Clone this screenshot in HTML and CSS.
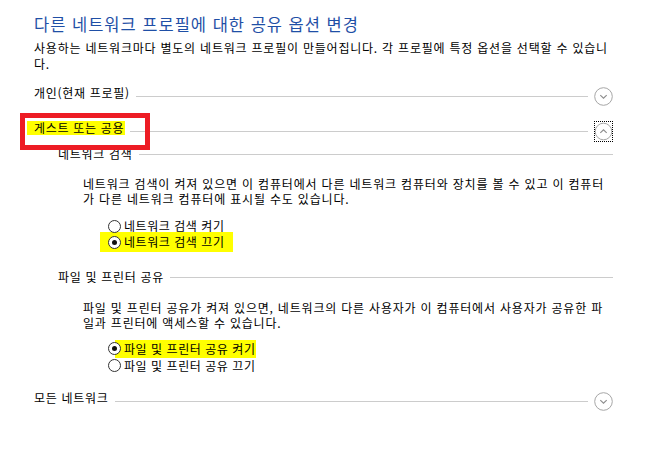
FILE: index.html
```html
<!DOCTYPE html>
<html lang="ko">
<head>
<meta charset="utf-8">
<title>고급 공유 설정</title>
<link rel="stylesheet" href="styles.css">
</head>
<body>
<div class="page">
  <h1 class="title">다른 네트워크 프로필에 대한 공유 옵션 변경</h1>
  <p class="desc">사용하는 네트워크마다 별도의 네트워크 프로필이 만들어집니다. 각 프로필에 특정 옵션을 선택할 수 있습니<br>다.</p>

  <div class="section sec-private">
    <div class="sec-head">
      <span class="sec-label">개인(현재 프로필)</span>
      <span class="rule"></span>
      <span class="toggle">
        <svg width="19" height="19" viewBox="0 0 19 19"><circle cx="9.5" cy="9.5" r="8.8" fill="none" stroke="#a6a6a6" stroke-width="1"/><path d="M6.3 8.2 L9.5 11.2 L12.7 8.2" fill="none" stroke="#8c8c8c" stroke-width="1.1"/></svg>
      </span>
    </div>
  </div>

  <div class="section sec-guest">
    <div class="sec-head head-guest">
      <span class="sec-label marked">게스트 또는 공용</span>
      <span class="rule"></span>
      <span class="toggle focused">
        <svg width="19" height="19" viewBox="0 0 19 19"><circle cx="9.5" cy="9.5" r="8.3" fill="none" stroke="#a6a6a6" stroke-width="1"/><path d="M6.3 10.8 L9.5 7.8 L12.7 10.8" fill="none" stroke="#8c8c8c" stroke-width="1.1"/></svg>
      </span>
    </div>

    <div class="sub sub-discovery">
      <div class="sub-head">
        <span class="sub-label">네트워크 검색</span>
        <span class="rule"></span>
      </div>
      <p class="sub-desc">네트워크 검색이 켜져 있으면 이 컴퓨터에서 다른 네트워크 컴퓨터와 장치를 볼 수 있고 이 컴퓨터<br>가 다른 네트워크 컴퓨터에 표시될 수도 있습니다.</p>
      <div class="radios radios-a">
        <div class="radio-row"><span class="radio"></span><span class="radio-text">네트워크 검색 켜기</span></div>
        <div class="radio-row"><span class="mark-wide"><span class="radio checked"></span><span class="radio-text">네트워크 검색 끄기</span></span></div>
      </div>
    </div>

    <div class="sub sub-sharing">
      <div class="sub-head">
        <span class="sub-label">파일 및 프린터 공유</span>
        <span class="rule"></span>
      </div>
      <p class="sub-desc">파일 및 프린터 공유가 켜져 있으면, 네트워크의 다른 사용자가 이 컴퓨터에서 사용자가 공유한 파<br>일과 프린터에 액세스할 수 있습니다.</p>
      <div class="radios radios-b">
        <div class="radio-row tall"><span class="radio checked"></span><span class="radio-text mark-text">파일 및 프린터 공유 켜기</span></div>
        <div class="radio-row tall"><span class="radio"></span><span class="radio-text">파일 및 프린터 공유 끄기</span></div>
      </div>
    </div>
  </div>

  <div class="section sec-all">
    <div class="sec-head">
      <span class="sec-label">모든 네트워크</span>
      <span class="rule"></span>
      <span class="toggle">
        <svg width="19" height="19" viewBox="0 0 19 19"><circle cx="9.5" cy="9.5" r="8.8" fill="none" stroke="#a6a6a6" stroke-width="1"/><path d="M6.3 8.2 L9.5 11.2 L12.7 8.2" fill="none" stroke="#8c8c8c" stroke-width="1.1"/></svg>
      </span>
    </div>
  </div>

  <div class="annot-box"></div>
</div>
</body>
</html>
```

FILE: styles.css
```css
html, body {
  margin: 0;
  padding: 0;
  background: #ffffff;
}

body {
  font-family: "Noto Sans CJK KR", "Noto Sans", sans-serif;
  font-size: 12px;
  color: #000000;
}

.page {
  position: relative;
  width: 579px;
  padding-left: 34px;
  padding-top: 13px;
  display: flex;
  flex-direction: column;
}

.title {
  margin: 0;
  font-size: 16.5px;
  font-weight: normal;
  line-height: 22px;
  color: #1f4fa6;
  letter-spacing: 1px;
  white-space: nowrap;
}

.desc {
  margin: 5px 0 0 0;
  line-height: 16px;
  letter-spacing: 0.78px;
  white-space: nowrap;
}

.section {
  display: flex;
  flex-direction: column;
}

.sec-private { margin-top: 14px; }
.sec-guest { margin-top: 15px; }
.sec-all { margin-top: 17px; }

.sec-head {
  display: flex;
  align-items: center;
  height: 20px;
}

.head-guest {
  height: 21px;
}

.sec-label {
  line-height: 14px;
  margin-bottom: 6px;
  letter-spacing: 0.7px;
  white-space: nowrap;
}

.sec-label.marked {
  background: #ffff00;
  padding: 0 1px 0 7px;
  margin-left: -7px;
  margin-bottom: 8px;
}

.rule {
  flex: 1;
  height: 1px;
  background: #cccccc;
  margin: 0 6px 0 6px;
}

.marked + .rule {
  margin-left: 5px;
}

.toggle {
  width: 19px;
  height: 19px;
  display: flex;
  align-items: center;
  justify-content: center;
  box-sizing: border-box;
}

.toggle svg {
  display: block;
}

.toggle.focused {
  height: 21px;
  outline: 1px dotted #000000;
  outline-offset: -1px;
}

.sub {
  display: flex;
  flex-direction: column;
  padding-left: 24px;
}

.sub-discovery { margin-top: 4px; }
.sub-sharing { margin-top: 19px; }

.sub-head {
  display: flex;
  align-items: center;
  height: 16px;
}

.sub-head .rule {
  margin-right: 0;
}

.sub-label {
  line-height: 16px;
  letter-spacing: 0.7px;
  white-space: nowrap;
}

.sub-desc {
  margin: 14px 0 0 25px;
  line-height: 15px;
  letter-spacing: 0.82px;
  white-space: nowrap;
}

.sub-sharing .sub-desc {
  margin-top: 15px;
  letter-spacing: 0.8px;
}

.radios {
  display: flex;
  flex-direction: column;
  padding-left: 50px;
}

.radios-a { margin-top: 12px; }
.radios-b { margin-top: 10px; }

.radio-row {
  display: flex;
  align-items: center;
  height: 16px;
}

.radio-row.tall { height: 17px; }

.radio {
  position: relative;
  z-index: 1;
  flex: none;
  width: 13px;
  height: 13px;
  box-sizing: border-box;
  border: 1px solid #333333;
  border-radius: 50%;
  background: #ffffff;
  display: flex;
  align-items: center;
  justify-content: center;
  margin-right: 3px;
}

.radio.checked::after {
  content: "";
  width: 5px;
  height: 5px;
  border-radius: 50%;
  background: #111111;
}

.radio-text {
  line-height: 16px;
  letter-spacing: 0.55px;
  white-space: nowrap;
}

.mark-wide {
  display: flex;
  align-items: center;
  background: #ffff00;
  padding: 2px 8px 2px 8px;
  margin-left: -8px;
}

.mark-text {
  background: #ffff00;
  padding-left: 9px;
  margin-left: -9px;
  line-height: 18px;
}

.annot-box {
  position: absolute;
  left: 20px;
  top: 113px;
  width: 130px;
  height: 37px;
  box-sizing: border-box;
  border: 5px solid #ed1c24;
  z-index: 5;
}
```
